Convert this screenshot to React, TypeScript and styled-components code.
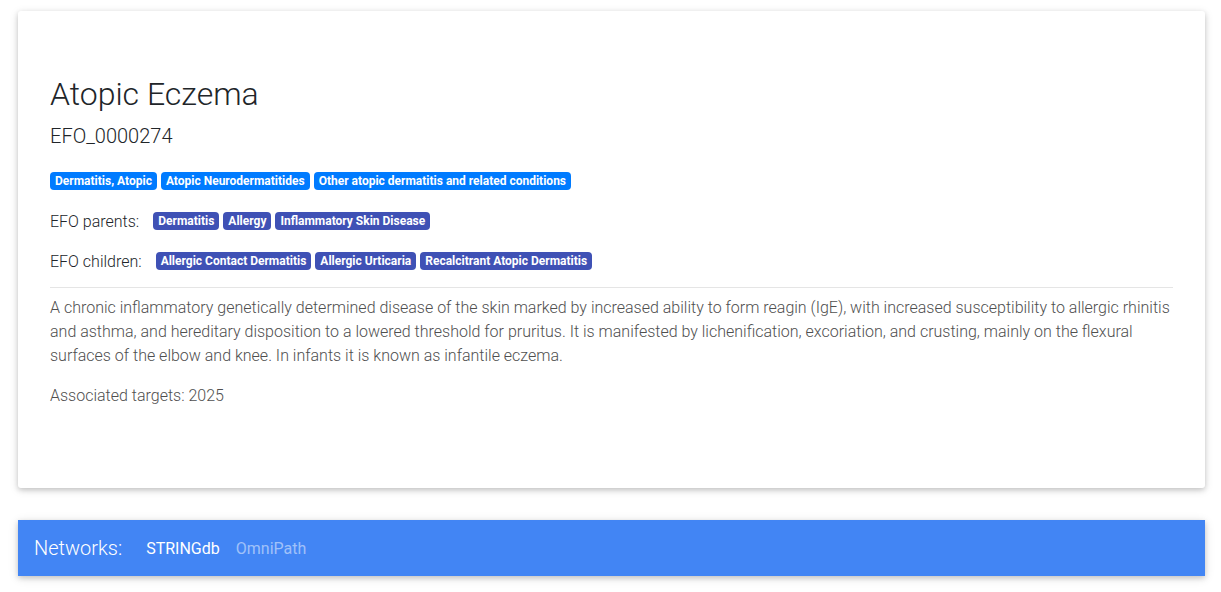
import React from 'react';
import styled, { createGlobalStyle } from 'styled-components';

const GlobalStyle = createGlobalStyle`
    body {
        margin: 0;
        background: #fff;
        font-family: Roboto, "Liberation Sans", sans-serif;
        font-weight: 300;
        color: #212529;
    }
`;

const disease = {
    name: 'Atopic Eczema',
    id: 'EFO_0000274',
    synonyms: ['Dermatitis, Atopic', 'Atopic Neurodermatitides', 'Other atopic dermatitis and related conditions'],
    parents: ['Dermatitis', 'Allergy', 'Inflammatory Skin Disease'],
    children: ['Allergic Contact Dermatitis', 'Allergic Urticaria', 'Recalcitrant Atopic Dermatitis'],
    description:
        'A chronic inflammatory genetically determined disease of the skin marked by increased ability to form reagin (IgE), with increased susceptibility to allergic rhinitis and asthma, and hereditary disposition to a lowered threshold for pruritus. It is manifested by lichenification, excoriation, and crusting, mainly on the flexural surfaces of the elbow and knee. In infants it is known as infantile eczema.',
    targets: 2025,
};

const App: React.FC = () => {
    return (
        <>
            <GlobalStyle />
            <Page>
                <Card>
                    <Title>{disease.name}</Title>
                    <Code>{disease.id}</Code>
                    <BadgeRow>
                        {disease.synonyms.map((s) => (
                            <Badge key={s} kind="primary">{s}</Badge>
                        ))}
                    </BadgeRow>
                    <BadgeRow>
                        <Label>EFO parents:</Label>
                        {disease.parents.map((s) => (
                            <Badge key={s} kind="indigo">{s}</Badge>
                        ))}
                    </BadgeRow>
                    <BadgeRow>
                        <Label>EFO children:</Label>
                        {disease.children.map((s) => (
                            <Badge key={s} kind="indigo">{s}</Badge>
                        ))}
                    </BadgeRow>
                    <Divider />
                    <Text>{disease.description}</Text>
                    <Text>Associated targets: {disease.targets}</Text>
                </Card>
                <NetworkBar>
                    <BarTitle>Networks:</BarTitle>
                    <NetLink active>STRINGdb</NetLink>
                    <NetLink>OmniPath</NetLink>
                </NetworkBar>
            </Page>
        </>
    );
};

const Page = styled.div`
    padding: 11px 16px 16px 18px;
    display: flex;
    flex-direction: column;
    gap: 32px;
`;

const Card = styled.div`
    background: #fff;
    border-radius: 3px;
    padding: 64px 32px 80px;
    box-shadow: 0 2px 5px 0 rgba(0, 0, 0, 0.16), 0 2px 10px 0 rgba(0, 0, 0, 0.12);
    display: flex;
    flex-direction: column;
`;

const Title = styled.h1`
    margin: 0;
    font-size: 32px;
    font-weight: 300;
    line-height: 1.2;
`;

const Code = styled.h5`
    margin: 11px 0 24px;
    font-size: 20px;
    font-weight: 300;
    line-height: 1.2;
`;

const BadgeRow = styled.div`
    display: flex;
    align-items: center;
    gap: 4px;
    height: 40px;
    &:first-of-type {
        height: 18px;
        margin-bottom: 11px;
    }
`;

const Label = styled.span`
    font-size: 16px;
    margin-right: 10px;
`;

const Badge = styled.span<{ kind: 'primary' | 'indigo' }>`
    display: inline-block;
    padding: 3px 5px;
    font-size: 12px;
    font-weight: 700;
    line-height: 1;
    color: #fff;
    border-radius: 4px;
    white-space: nowrap;
    background: ${(p) => (p.kind === 'primary' ? '#007bff' : '#3f51b5')};
`;

const Divider = styled.hr`
    margin: 6px 0 8px;
    border: 0;
    border-top: 1px solid rgba(0, 0, 0, 0.1);
    width: 100%;
`;

const Text = styled.p`
    margin: 0 0 16px;
    font-size: 16px;
    line-height: 24px;
    color: #4f4f4f;
    &:last-child {
        margin-bottom: 0;
    }
`;

const NetworkBar = styled.nav`
    height: 56px;
    background: #4285f4;
    display: flex;
    align-items: center;
    padding: 0 16px;
    box-shadow: 0 2px 5px 0 rgba(0, 0, 0, 0.16), 0 2px 10px 0 rgba(0, 0, 0, 0.12);
`;

const BarTitle = styled.span`
    font-size: 20px;
    font-weight: 300;
    color: #fff;
    margin-right: 16px;
`;

const NetLink = styled.a<{ active?: boolean }>`
    font-size: 16px;
    font-weight: 400;
    padding: 8px;
    color: ${(p) => (p.active ? '#fff' : 'rgba(255, 255, 255, 0.5)')};
    cursor: pointer;
`;

export default App;
